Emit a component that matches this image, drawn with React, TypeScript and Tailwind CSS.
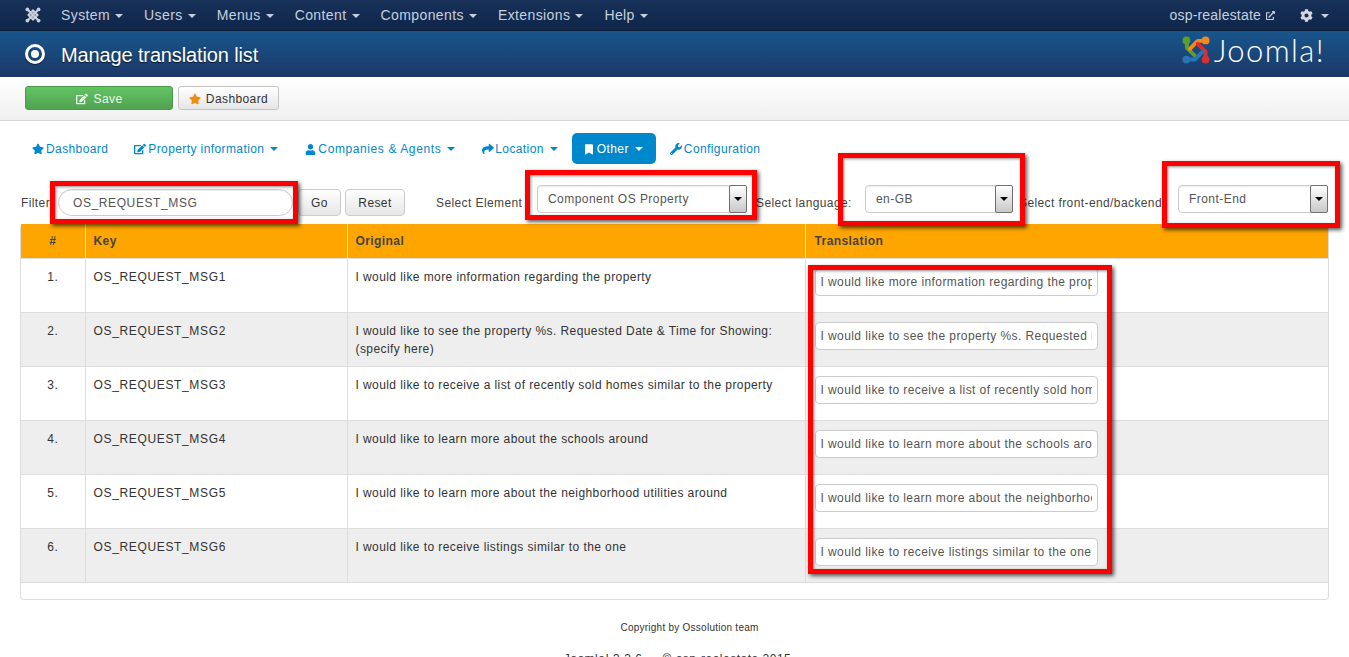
import React from "react";
import { FaStar, FaEdit, FaUser, FaShare, FaBookmark, FaWrench, FaCog, FaExternalLinkAlt } from "react-icons/fa";

const Caret = ({ className = "" }: { className?: string }) => (
  <span className={`inline-block w-0 h-0 border-x-[4.5px] border-x-transparent border-t-[4.5px] border-t-current ${className}`} />
);

const JoomlaMark = () => {
  const parts = [
    { col: "#5a9f2a", d: "M6 5.5 L6 13 L14 21", cx: 5.5, cy: 5.5 },
    { col: "#f08a24", d: "M25 6 L17 6 L9 14", cx: 25, cy: 5.5 },
    { col: "#d9302f", d: "M25 25 L25 17 L17 9", cx: 25, cy: 25 },
    { col: "#2a73b8", d: "M6 25 L14 25 L22 17", cx: 5.5, cy: 25 },
  ];
  return (
    <svg viewBox="0 0 30.5 30.5" className="w-full h-full">
      {parts.map((p) => (
        <g key={p.col}>
          <path d={p.d} fill="none" stroke={p.col} strokeWidth={4} strokeLinejoin="round" strokeLinecap="round" />
          <circle cx={p.cx} cy={p.cy} r={4} fill={p.col} />
        </g>
      ))}
    </svg>
  );
};

const JoomlaMono = () => (
  <svg viewBox="0 0 16 16" className="w-full h-full">
    <g fill="none" stroke="#c9ced6" strokeWidth={2.2}>
      <path d="M2.5 2.5 L13.5 13.5 M13.5 2.5 L2.5 13.5" />
      <path d="M8 3.6 L12.4 8 L8 12.4 L3.6 8 Z" />
    </g>
    <circle cx={2.4} cy={2.4} r={1.9} fill="#c9ced6" />
    <circle cx={13.6} cy={2.4} r={1.9} fill="#c9ced6" />
    <circle cx={2.4} cy={13.6} r={1.9} fill="#c9ced6" />
    <circle cx={13.6} cy={13.6} r={1.9} fill="#c9ced6" />
  </svg>
);

const navItems = ["System", "Users", "Menus", "Content", "Components", "Extensions", "Help"];
const rows: [string, string, string, string, string][] = [
  ["1.", "OS_REQUEST_MSG1", "I would like more information regarding the property", "I would like more information regarding the property", ""],
  ["2.", "OS_REQUEST_MSG2", "I would like to see the property %s. Requested Date & Time for Showing:", "I would like to see the property %s. Requested Date & Time for Showing: (specify here)", "(specify here)"],
  ["3.", "OS_REQUEST_MSG3", "I would like to receive a list of recently sold homes similar to the property", "I would like to receive a list of recently sold homes similar to the property", ""],
  ["4.", "OS_REQUEST_MSG4", "I would like to learn more about the schools around", "I would like to learn more about the schools around", ""],
  ["5.", "OS_REQUEST_MSG5", "I would like to learn more about the neighborhood utilities around", "I would like to learn more about the neighborhood utilities around", ""],
  ["6.", "OS_REQUEST_MSG6", "I would like to receive listings similar to the one", "I would like to receive listings similar to the one", ""],
];

const SelectBox = ({ value, className }: { value: string; className: string }) => (
  <div className={`relative h-[28px] ${className}`}>
    <select
      defaultValue={value}
      className="w-full h-full appearance-none bg-white border border-[#ccc] rounded-[4px] pl-[10px] pr-5 text-[12px] text-[#555] tracking-[0.45px] shadow-[inset_0_1px_1px_rgba(0,0,0,0.075)]"
    >
      <option>{value}</option>
    </select>
    <span className="absolute right-0 top-0 w-[18px] h-[28px] border border-[#707070] rounded-[2px] bg-gradient-to-b from-white to-[#c8c8c8] flex items-center justify-center text-black">
      <Caret />
    </span>
  </div>
);

const RedBox = ({ className }: { className: string }) => (
  <div className={`absolute border-[5px] border-[#fe0000] shadow-[2px_2px_4px_rgba(0,0,0,0.65),inset_1px_1px_3px_rgba(0,0,0,0.45)] pointer-events-none ${className}`} />
);

const pill = "flex items-center h-[31px] pt-[1px] rounded-[5px] text-[12px] tracking-[0.4px]";

export default function App() {
  return (
    <div className="relative h-[657px] overflow-hidden bg-white text-[12px] text-[#333] font-['Liberation_Sans',Arial,sans-serif]">
      <div className="h-[31px] pt-[1px] bg-gradient-to-b from-[#17315a] to-[#10264a] border-b border-[#0d1f3b] flex items-center text-[#c6d0dc] text-[14px] tracking-[0.4px]">
        <div className="w-[16px] h-[16px] ml-[25px] mr-[20px] -mt-[2px]"><JoomlaMono /></div>
        {navItems.map((n) => (
          <div key={n} className="flex items-center mr-[21px] gap-[5px]">
            <span>{n}</span>
            <Caret />
          </div>
        ))}
        <div className="ml-auto flex items-center">
          <span className="tracking-[0.2px]">osp-realestate</span>
          <FaExternalLinkAlt className="ml-[5px] text-[9px]" />
          <FaCog className="ml-[25px] text-[13px] text-[#d5d9df]" />
          <Caret className="ml-[8px] mr-[20px]" />
        </div>
      </div>

      <div className="h-[46px] bg-gradient-to-b from-[#17568c] to-[#1a3867] flex items-center pl-[25px] pr-[24px] text-white">
        <div className="w-[20px] h-[20px] rounded-full border-[3px] border-white flex items-center justify-center mr-[16px] shadow-[0_1px_1px_rgba(0,0,0,0.5)]">
          <div className="w-[8px] h-[8px] rounded-full bg-white" />
        </div>
        <h1 className="text-[20px] tracking-[-0.13px] mt-[2px] [text-shadow:0_1px_1px_rgba(0,0,0,0.6)]">Manage translation list</h1>
        <div className="ml-auto flex items-center h-full -mt-[8px]">
          <div className="w-[30px] h-[30px] mr-[3px]"><JoomlaMark /></div>
          <span className="text-[31px] leading-none font-light font-['Lato',sans-serif] tracking-[1.4px]">Joomla!</span>
        </div>
      </div>

      <div className="h-[44px] bg-gradient-to-b from-white to-[#f0f0f0] border-b border-[#d6d6d6] flex items-start pt-[9px] pl-[25px] gap-[5px]">
        <button className="w-[148px] h-[24px] pt-[1px] rounded-[3px] bg-gradient-to-b from-[#62c462] to-[#51a351] border border-[#4a9a4a] text-[#eef7ee] flex items-center justify-center gap-[6px] text-[12px] tracking-[0.4px]">
          <FaEdit className="text-[12px]" />Save
        </button>
        <button className="w-[101px] h-[24px] pt-[1px] rounded-[3px] bg-gradient-to-b from-white to-[#e6e6e6] border border-[#c4c4c4] text-[#333] flex items-center justify-center gap-[5px] text-[12px] tracking-[0.4px]">
          <FaStar className="text-[12px] text-[#f28c0f]" />Dashboard
        </button>
      </div>

      <div className="flex items-center h-[31px] mt-[12px] pl-[20px] text-[#0088cc]">
        <div className={`${pill} px-[12px] mr-[2px]`}><FaStar className="mr-[2px]" />Dashboard</div>
        <div className={`${pill} px-[12px] mr-[3px]`}><FaEdit className="mr-[2px]" />Property information<Caret className="ml-[6px]" /></div>
        <div className={`${pill} px-[12px] mr-[3px] tracking-[0.6px]`}><FaUser className="mr-[2px] text-[11px]" />Companies &amp; Agents<Caret className="ml-[6px]" /></div>
        <div className={`${pill} px-[12px] mr-[2px]`}><FaShare className="mr-[1px]" />Location<Caret className="ml-[6px]" /></div>
        <div className={`${pill} px-[13px] w-[84px] bg-[#0088cc] text-white`}><FaBookmark className="mr-[4px] text-[11px]" />Other<Caret className="ml-[6px]" /></div>
        <div className={`${pill} px-[14px]`}><FaWrench className="mr-[2px]" />Configuration</div>
      </div>

      <div className="flex items-start h-[32px] mt-[21px] pl-[21px] text-[#444] tracking-[0.4px]">
        <span className="mt-[9px] w-[37px] shrink-0">Filter</span>
        <input
          readOnly
          value="OS_REQUEST_MSG"
          className="mt-[4px] w-[235px] h-[27px] rounded-full border border-[#ccc] bg-white pl-[14px] text-[12px] text-[#555] tracking-[0.6px] shadow-[inset_0_1px_1px_rgba(0,0,0,0.075)]"
        />
        <button className="ml-[5px] mt-[4px] w-[43px] h-[27px] rounded-[4px] border border-[#ccc] bg-gradient-to-b from-white to-[#e6e6e6] text-[#333]">Go</button>
        <button className="ml-[4px] mt-[4px] w-[60px] h-[27px] rounded-[4px] border border-[#ccc] bg-gradient-to-b from-white to-[#e6e6e6] text-[#333]">Reset</button>
        <span className="ml-[31px] mt-[9px] w-[101px] shrink-0">Select Element</span>
        <SelectBox value="Component OS Property" className="w-[210px]" />
        <span className="ml-[9px] mt-[9px] w-[109px] shrink-0">Select language:</span>
        <SelectBox value="en-GB" className="w-[148px]" />
        <span className="ml-[6px] mt-[9px] w-[159px] shrink-0 whitespace-nowrap">Select front-end/backend</span>
        <SelectBox value="Front-End" className="w-[150px]" />
      </div>

      <div className="mx-[20px] mt-[7px] h-[376px] border border-[#ddd] rounded-[4px] border-t-0">
        <table className="w-full table-fixed border-collapse tracking-[0.42px]">
          <colgroup>
            <col className="w-[64px]" />
            <col className="w-[262px]" />
            <col className="w-[458px]" />
            <col />
          </colgroup>
          <thead>
            <tr className="h-[34px] bg-[#ffa500] text-[#444] font-bold text-left">
              <th className="text-center border-r border-[#e8e8e8]">#</th>
              <th className="pl-[8px] border-r border-[#e8e8e8]">Key</th>
              <th className="pl-[8px] border-r border-[#e8e8e8]">Original</th>
              <th className="pl-[9px]">Translation</th>
            </tr>
          </thead>
          <tbody>
            {rows.map((r, i) => (
              <tr key={r[0]} className={`h-[54px] border-y border-[#ddd] align-top ${i % 2 ? "bg-[#eeeeee]" : "bg-white"}`}>
                <td className="text-center pt-[9px] leading-[18px] border-r border-[#ddd]">{r[0]}</td>
                <td className="pl-[8px] pt-[9px] leading-[18px] border-r border-[#ddd] tracking-[0.65px]">{r[1]}</td>
                <td className="pl-[8px] pt-[9px] leading-[18px] border-r border-[#ddd]">
                  <div>{r[2]}</div>
                  {r[4] && <div>{r[4]}</div>}
                </td>
                <td className="pl-[9px] pt-[9px]">
                  <input
                    readOnly
                    value={r[3]}
                    className="block w-[283px] h-[28px] border border-[#ccc] rounded-[4px] bg-white px-[5px] text-[12px] text-[#555] tracking-[0.42px]"
                  />
                </td>
              </tr>
            ))}
          </tbody>
        </table>
      </div>

      <div className="text-center text-[10px] mt-[20px] pl-[30px] tracking-[0.25px]">Copyright by Ossolution team</div>
      <div className="text-center text-[12px] mt-[15px] pl-[6px] tracking-[0.5px]">Joomla! 3.3.6 — © osp-realestate 2015</div>

      <RedBox className="left-[50px] top-[181px] w-[248px] h-[43px]" />
      <RedBox className="left-[525px] top-[170px] w-[232px] h-[50px]" />
      <RedBox className="left-[838px] top-[153px] w-[187px] h-[73px]" />
      <RedBox className="left-[1162px] top-[161px] w-[178px] h-[67px]" />
      <RedBox className="left-[808px] top-[265px] w-[304px] h-[309px]" />
    </div>
  );
}
